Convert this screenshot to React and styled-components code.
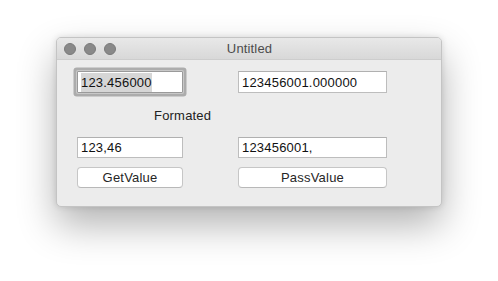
import React from 'react';
import styled, { createGlobalStyle } from 'styled-components';

const GlobalStyle = createGlobalStyle`
    html, body {
        margin: 0;
        padding: 0;
        background: #ffffff;
        font-family: 'Liberation Sans', Arial, sans-serif;
    }
`;

const Page = styled.div`
    width: 498px;
    height: 281px;
    padding: 37px 0 0 56px;
    box-sizing: border-box;
    overflow: hidden;
`;

const Window = styled.div`
    width: 386px;
    height: 170px;
    box-sizing: border-box;
    border: 1px solid #c4c4c4;
    border-radius: 5px;
    background: #ececec;
    overflow: hidden;
    display: flex;
    flex-direction: column;
    box-shadow: 0 18px 38px rgba(0, 0, 0, 0.3), 0 0 6px rgba(0, 0, 0, 0.12);
`;

const TitleBar = styled.div`
    height: 21px;
    flex: none;
    display: flex;
    align-items: center;
    padding-left: 7px;
    background: linear-gradient(#e8e8e8, #d8d8d8);
    border-bottom: 1px solid #cdcdcd;
    position: relative;
`;

const Lights = styled.div`
    display: flex;
    gap: 8px;
`;

const Light = styled.span`
    width: 12px;
    height: 12px;
    border-radius: 50%;
    background: #898989;
    box-sizing: border-box;
    border: 0.5px solid #7a7a7a;
`;

const Title = styled.div`
    position: absolute;
    left: 0;
    right: 0;
    top: 0;
    bottom: 0;
    display: flex;
    align-items: center;
    justify-content: center;
    font-size: 13px;
    letter-spacing: 0.15px;
    color: #4c4c4c;
    padding-left: 1px;
`;

const Content = styled.div`
    padding: 11px 0 0 20px;
    display: grid;
    grid-template-columns: 106px 149px;
    column-gap: 55px;
`;

const Field = styled.div`
    height: ${(p) => p.$h || 22}px;
    box-sizing: border-box;
    background: #ffffff;
    border: 1px solid #bdbdbd;
    border-top-color: #b0b0b0;
    font-size: 13px;
    letter-spacing: 0.2px;
    color: #111;
    display: flex;
    align-items: center;
    padding-left: 3px;
    ${(p) => p.$focus && `
        box-shadow: 0 0 0 1px #c8c8c8, 0 0 0 3.5px #acacac;
        border-radius: 1px;
        border-color: #9a9a9a;
    `}
`;

const Selected = styled.span`
    background: #d6d6d6;
    padding: 2px 0;
`;

const Label = styled.div`
    grid-column: 1 / span 2;
    height: 44px;
    display: flex;
    align-items: center;
    padding-left: 77px;
    font-size: 13px;
    letter-spacing: 0.2px;
    color: #222;
`;

const Button = styled.button`
    margin-top: 9px;
    height: 21px;
    box-sizing: border-box;
    background: #ffffff;
    border: 1px solid #c6c6c6;
    border-bottom-color: #b8b8b8;
    border-radius: 4px;
    font-family: inherit;
    font-size: 13px;
    letter-spacing: 0.2px;
    color: #262626;
    padding: 0;
`;

export default function App() {
    return (
        <>
            <GlobalStyle />
            <Page>
                <Window>
                    <TitleBar>
                        <Lights>
                            <Light />
                            <Light />
                            <Light />
                        </Lights>
                        <Title>Untitled</Title>
                    </TitleBar>
                    <Content>
                        <Field $focus><Selected>123.456000</Selected></Field>
                        <Field>123456001.000000</Field>
                        <Label>Formated</Label>
                        <Field $h={21}>123,46</Field>
                        <Field $h={21}>123456001,</Field>
                        <Button>GetValue</Button>
                        <Button>PassValue</Button>
                    </Content>
                </Window>
            </Page>
        </>
    );
}
